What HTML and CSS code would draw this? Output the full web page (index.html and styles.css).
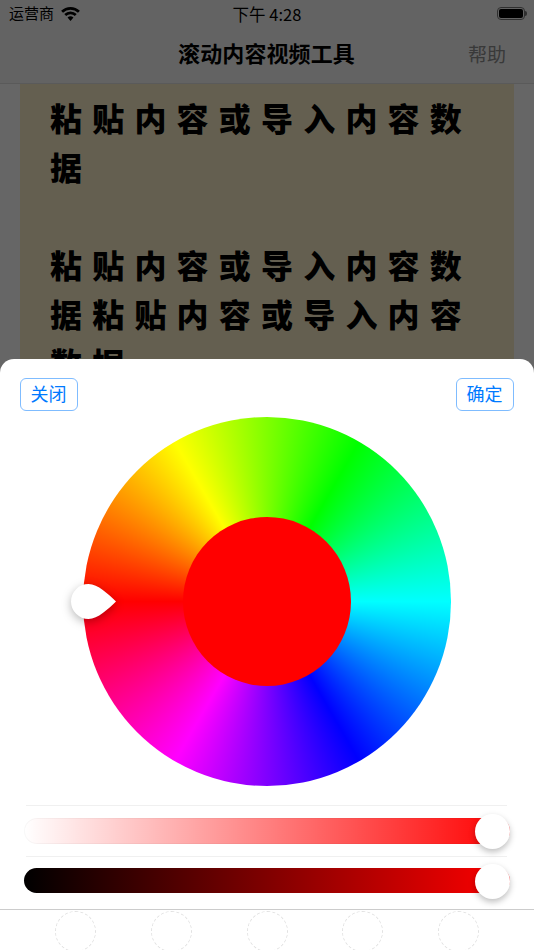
FILE: index.html
```html
<!DOCTYPE html>
<html lang="zh">
<head>
<meta charset="utf-8">
<title>滚动内容视频工具</title>
<link rel="stylesheet" href="styles.css">
</head>
<body>
<div class="page">
  <header class="top">
    <div class="status">
      <div class="status-left">
        <span class="carrier">运营商</span>
        <svg class="wifi" viewBox="0 0 18 14" width="19" height="15"><path d="M1 5.4A11.5 11.5 0 0 1 17 5.4M4 8.4A7.2 7.2 0 0 1 14 8.4" fill="none" stroke="#000" stroke-width="2.6"/><path d="M9 14 6.2 10.9A4 4 0 0 1 11.8 10.9Z" fill="#000"/></svg>
      </div>
      <span class="time">下午 4:28</span>
      <div class="battery"><span class="battery-fill"></span></div>
    </div>
    <nav class="nav">
      <h1 class="title">滚动内容视频工具</h1>
      <span class="help">帮助</span>
    </nav>
  </header>
  <main class="content">
    <div class="paper">
      <p class="para">粘贴内容或导入内容数据</p>
      <p class="para spaced">粘贴内容或导入内容数据粘贴内容或导入内容数据</p>
    </div>
  </main>
  <div class="dim"></div>
  <section class="sheet">
    <div class="actions">
      <button class="btn">关闭</button>
      <button class="btn">确定</button>
    </div>
    <div class="wheel-wrap">
      <div class="wheel">
        <div class="wheel-core"></div>
        <svg class="handle" viewBox="0 0 45 35" width="45" height="35"><path d="M17.5 0C27 0 37 10 45 17.5C37 25 27 35 17.5 35A17.5 17.5 0 0 1 17.5 0Z" fill="#fff"/></svg>
      </div>
    </div>
    <div class="rule first"></div>
    <div class="track alpha"><span class="thumb"></span></div>
    <div class="rule"></div>
    <div class="track value"><span class="thumb"></span></div>
    <div class="swatches">
      <span class="swatch"></span>
      <span class="swatch"></span>
      <span class="swatch"></span>
      <span class="swatch"></span>
      <span class="swatch"></span>
    </div>
  </section>
</div>
</body>
</html>
```

FILE: styles.css
```css
* { box-sizing: border-box; }
html, body { margin: 0; padding: 0; }
body { background: #fff; font-family: "Liberation Sans", "Noto Sans CJK SC", sans-serif; }
.page { position: relative; width: 534px; height: 950px; overflow: hidden; background: #fff; }

.top { background: #f8f8f8; border-bottom: 1px solid #e0e0e0; height: 84px; }
.status { position: relative; display: flex; align-items: flex-start; justify-content: space-between; height: 28px; padding: 5px 8px 0 9px; }
.status-left { display: flex; align-items: center; gap: 7px; }
.carrier { font-size: 15px; line-height: 18px; color: #000; }
.wifi { display: block; margin-top: -2px; }
.time { position: absolute; left: 0; right: 0; top: 2px; text-align: center; font-size: 16.5px; line-height: 24px; color: #000; font-family: "Noto Sans CJK SC", sans-serif; }
.battery { position: relative; width: 28px; height: 13px; margin-top: 2px; margin-right: 1px; border: 1px solid #777; border-radius: 4px; padding: 1px; }
.battery::after { content: ""; position: absolute; right: -3px; top: 3px; width: 2px; height: 5px; background: #777; border-radius: 0 2px 2px 0; }
.battery-fill { display: block; height: 100%; background: #000; border-radius: 2px; }

.nav { position: relative; display: flex; align-items: center; justify-content: flex-end; height: 55px; padding: 0 28px 4px 0; }
.title { position: absolute; left: 0; right: 1px; top: 8px; margin: 0; text-align: center; font-size: 22px; line-height: 32px; font-weight: 700; letter-spacing: 0.1px; color: #000; font-family: "Noto Sans CJK SC", sans-serif; }
.help { font-size: 19px; color: #8e8e8e; font-family: "Noto Sans CJK SC", sans-serif; }

.content { padding: 0 20px; }
.paper { background: #fbeec9; height: 400px; padding: 9px 30px 0; font-family: "Noto Sans CJK SC", sans-serif; }
.para { margin: 0; font-size: 32px; line-height: 49px; font-weight: 900; letter-spacing: 10.2px; color: #000; }
.spaced { margin-top: 49px; }

.dim { position: absolute; inset: 0; background: rgba(0, 0, 0, 0.6); }

.sheet { position: absolute; left: 0; right: 0; bottom: 0; height: 591px; background: #fff; border-radius: 14px 14px 0 0; overflow: hidden; }
.actions { display: flex; justify-content: space-between; padding: 19px 20px 0; }
.btn { width: 58px; height: 33px; padding: 0 1px 4px 0; background: #fff; border: 1px solid #7fbcff; border-radius: 6px; color: #007aff; font-size: 18px; font-family: "Noto Sans CJK SC", sans-serif; }

.wheel-wrap { display: flex; justify-content: center; margin-top: 6px; }
.wheel { position: relative; width: 368px; height: 369px; border-radius: 50%; background: conic-gradient(from 270deg, #f00, #ff0, #0f0, #0ff, #00f, #f0f, #f00); display: flex; align-items: center; justify-content: center; }
.wheel-core { width: 168px; height: 169px; border-radius: 50%; background: #f00; }
.handle { position: absolute; left: -12px; top: 167px; overflow: visible; filter: drop-shadow(0 3px 5px rgba(0, 0, 0, 0.28)); }

.rule { height: 1px; margin: 12px 27px 12px 26px; background: #f0f0f0; }
.rule.first { margin-top: 19px; }
.track { position: relative; height: 26px; margin: 0 24px; border-radius: 13px; }
.alpha { background: linear-gradient(to right, rgba(255, 0, 0, 0), #f00); box-shadow: inset 0 0 0 1px rgba(0, 0, 0, 0.03); }
.value { height: 25px; background: linear-gradient(to right, #000, #f00); }
.thumb { position: absolute; right: 0; top: -4.5px; width: 35px; height: 35px; border-radius: 50%; background: #fff; box-shadow: 0 3px 6px rgba(0, 0, 0, 0.25); }
.rule + .value { margin-top: -1px; }

.swatches { display: flex; justify-content: space-between; margin-top: 16px; padding: 1px 55px 0; border-top: 1px solid #ccc; }
.swatch { flex: none; width: 41px; height: 41px; border-radius: 50%; border: 1px dashed #e2e2e2; }
```
